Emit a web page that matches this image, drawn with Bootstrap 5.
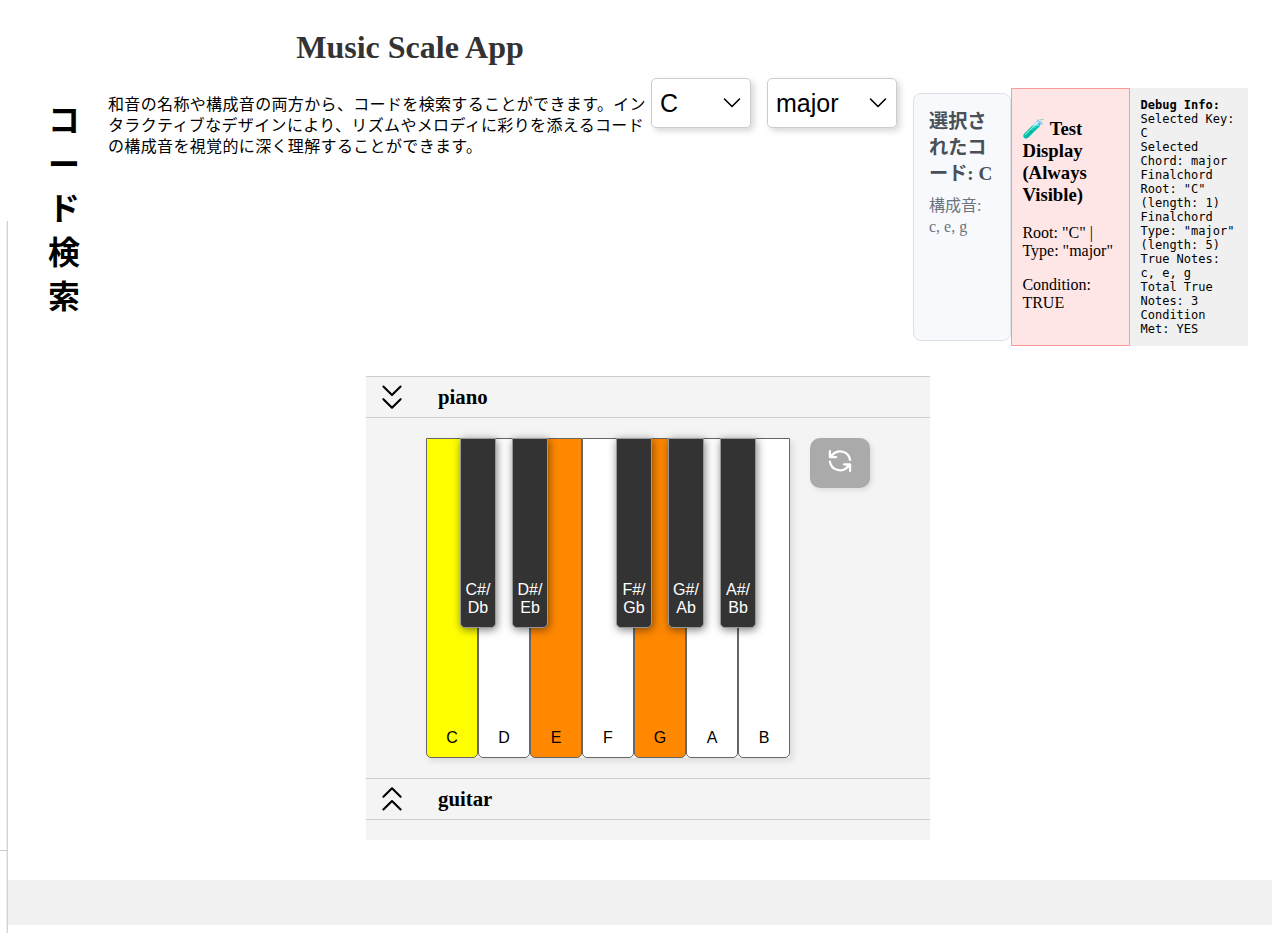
<!DOCTYPE html>
<html lang="ja">
<head>
<meta charset="utf-8">
<meta name="viewport" content="width=device-width, initial-scale=1">
<title>Music Scale App</title>
<link href="https://cdn.jsdelivr.net/npm/bootstrap@5.3.0/dist/css/bootstrap.min.css" rel="stylesheet">
<style>
body{font-family:"Liberation Serif","Noto Sans CJK JP",serif;font-size:16px;line-height:18px;color:#000;background:#fff;height:933px;overflow:hidden}
.rail{width:8px;margin-top:221px;height:712px;border-right:1px solid #d3d3d3;box-shadow:inset -1px 0 #eee}
.rail-line{margin-top:629px;height:1px;background:#ccc;width:7px}
.page{width:1264px}
.app-title{width:804px;height:78px;padding-top:29px;font-size:32px;line-height:37px;font-weight:700;color:#333;margin:0}
.chord-row{height:278px;padding-left:40px}
.side-title{width:32px;font-size:32px;line-height:44px;font-weight:700;margin:21px 28px 0 0;word-break:break-all}
.intro{width:543px;padding-right:0;margin:16px 0 0;line-height:21px;letter-spacing:.35px;font-weight:400}
.picker{height:50px;border:1px solid #ccc;border-radius:5px;padding:0 9px 0 8px;font:25px/48px "Liberation Sans",sans-serif;box-shadow:3px 3px 6px rgba(0,0,0,.16);margin-right:16px}
.picker-key{width:100px}.picker-type{width:130px}
.chord-info{width:98px;height:248px;margin-top:15px;padding:15px;background:#f8f9fc;border:1px solid #dee2e6;border-radius:8px}
.chord-info h3{font-size:19.2px;line-height:26px;font-weight:700;color:#495057;margin:0 -4px 9px 0;word-break:break-all}
.chord-info p{color:#6c757d;line-height:20.5px;margin:0}
.test-box{width:119px;height:258px;margin-top:10px;padding:29px 5px 0 10.4px;background:#ffe6e6;border:1px solid #ff9999}
.test-box h3{font-size:18.72px;line-height:22px;font-weight:700;margin:0 0 18px}
.test-box p{margin:0 0 16px}
.debug-box{width:118px;height:258px;margin-top:10px;padding:10px 10px 10px 10.5px;background:#f0f0f0;font:12px/14px "DejaVu Sans Mono",monospace}
.instruments{width:564px;height:464px;margin:20px 0 0 358px;background:#f4f4f4}
.fold{height:42px;border-top:1px solid #ccc;border-bottom:1px solid #ccc;padding-left:14px}
.fold h2{font-size:20.8px;line-height:24px;font-weight:700;margin:0 0 0 34px}
.board{height:360px;padding:20px 0 20px 60px}
.keys{width:364px;height:320px;font-family:"Liberation Sans",sans-serif;box-shadow:3px 3px 6px rgba(0,0,0,.1)}
.white-key{width:52px;background:#fff;border:1px solid #666;border-radius:0 0 5px 5px;padding-bottom:10px}
.root-key{background:#ff0}.tone-key{background:#f80}
.black-key{position:absolute;top:0;width:36px;height:190px;background:#333;color:#fff;border:1px solid #999;border-radius:0 0 5px 5px;padding-bottom:10px;box-shadow:1px 2px 8px rgba(0,0,0,.5)}
.k1{left:34px}.k2{left:86px}.k3{left:190px}.k4{left:242px}.k5{left:294px}
.reset{width:60px;height:50px;border:0;border-radius:10px;background:#aaa;margin-left:20px;padding:10px 0 0;box-shadow:2px 2px 5px rgba(0,0,0,.1)}
.foot{height:45px;margin-top:40px;background:#f1f1f1}
svg{display:block;flex:none;fill:none;stroke:#000;stroke-linecap:round;stroke-linejoin:round}
</style>
</head>
<body class="d-flex">
<aside class="rail flex-shrink-0"><div class="rail-line"></div></aside>
<div class="page flex-shrink-0">
<h1 class="app-title text-center">Music Scale App</h1>
<main>
<section class="chord-row d-flex align-items-start">
  <h2 class="side-title flex-shrink-0">コード検索</h2>
  <p class="intro flex-shrink-0">和音の名称や構成音の両方から、コードを検索することができます。インタラクティブなデザインにより、リズムやメロディに彩りを添えるコードの構成音を視覚的に深く理解することができます。</p>
  <div class="picker picker-key d-flex align-items-center justify-content-between flex-shrink-0" role="combobox" aria-label="key">C
    <svg width="18" height="12" viewBox="0 0 18 12" stroke-width="1.6"><path d="M1.5 2 9 9.5 16.5 2"/></svg></div>
  <div class="picker picker-type d-flex align-items-center justify-content-between flex-shrink-0" role="combobox" aria-label="type">major
    <svg width="18" height="12" viewBox="0 0 18 12" stroke-width="1.6"><path d="M1.5 2 9 9.5 16.5 2"/></svg></div>
  <div class="chord-info flex-shrink-0"><h3>選択されたコード: C</h3><p>構成音:<br>c, e, g</p></div>
  <div class="test-box flex-shrink-0"><h3>🧪 Test Display (Always Visible)</h3><p>Root: "C" | Type: "major"</p><p>Condition: TRUE</p></div>
  <div class="debug-box flex-shrink-0"><strong>Debug Info:</strong><br>Selected Key: C<br>Selected Chord: major<br>Finalchord Root: "C" (length: 1)<br>Finalchord Type: "major" (length: 5)<br>True Notes: c, e, g<br>Total True Notes: 3<br>Condition Met: YES</div>
</section>
<section class="instruments">
  <div class="fold d-flex align-items-center">
    <svg width="24" height="26" viewBox="0 0 24 26" stroke-width="2.1"><path d="M3.400 2.500 12 11 20.600 2.500M3.400 15.200 12 23.700 20.600 15.200"/></svg>
    <h2>piano</h2></div>
  <div class="board d-flex align-items-start">
    <div class="keys position-relative d-flex text-center">
      <div class="white-key root-key d-flex align-items-end justify-content-center">C</div>
      <div class="white-key d-flex align-items-end justify-content-center">D</div>
      <div class="white-key tone-key d-flex align-items-end justify-content-center">E</div>
      <div class="white-key d-flex align-items-end justify-content-center">F</div>
      <div class="white-key tone-key d-flex align-items-end justify-content-center">G</div>
      <div class="white-key d-flex align-items-end justify-content-center">A</div>
      <div class="white-key d-flex align-items-end justify-content-center">B</div>
      <div class="black-key k1 d-flex align-items-end justify-content-center">C#/<br>Db</div>
      <div class="black-key k2 d-flex align-items-end justify-content-center">D#/<br>Eb</div>
      <div class="black-key k3 d-flex align-items-end justify-content-center">F#/<br>Gb</div>
      <div class="black-key k4 d-flex align-items-end justify-content-center">G#/<br>Ab</div>
      <div class="black-key k5 d-flex align-items-end justify-content-center">A#/<br>Bb</div>
    </div>
    <button class="reset d-flex justify-content-center align-items-start" aria-label="reset">
      <svg width="26" height="26" viewBox="0 0 26 26" style="stroke:#fff" stroke-width="2.2"><path d="M2.900 3V9.200H9.200M4 8.300 5.500 6.700A10.200 10.200 0 0 1 23.100 12M23.100 23V16.400H17M22 17.300 20.500 18.900A10.200 10.200 0 0 1 2.900 13.600"/><path d="M3 5.500V9H7zM23 20.500V16.500H19z" style="fill:#fff" stroke-width=".8"/></svg>
    </button>
  </div>
  <div class="fold d-flex align-items-center">
    <svg width="24" height="26" viewBox="0 0 24 26" stroke-width="2.1"><path d="M3.400 10.800 12 2.300 20.600 10.800M3.400 23.500 12 15 20.600 23.500"/></svg>
    <h2>guitar</h2></div>
</section>
</main>
<footer class="foot"></footer>
</div>
<script src="https://cdn.jsdelivr.net/npm/bootstrap@5.3.0/dist/js/bootstrap.bundle.min.js"></script>
</body>
</html>
